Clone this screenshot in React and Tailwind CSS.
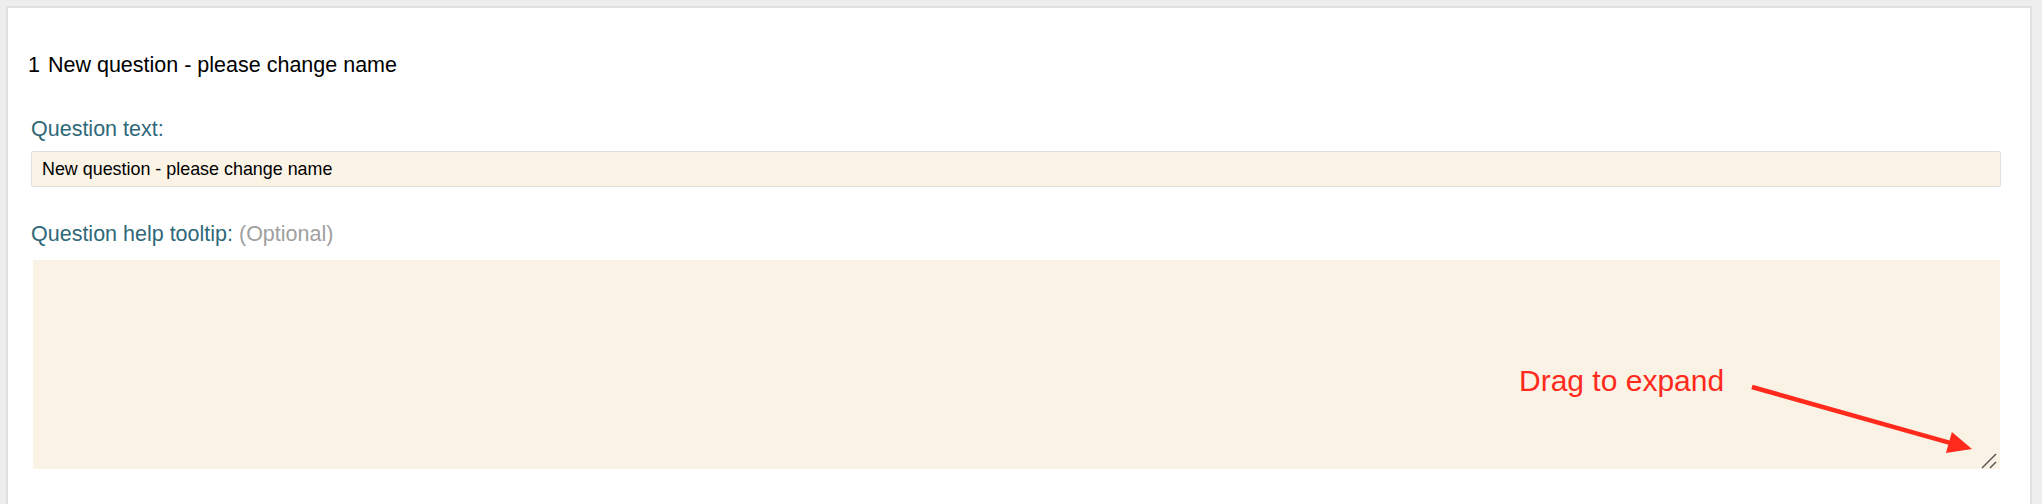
import React from "react";

export default function App() {
  const font = { fontFamily: '"Liberation Sans", Arial, Helvetica, sans-serif' };
  return (
    <div className="min-h-screen bg-[#eeeeee] pt-[6px] pl-[6px] pr-[10px]" style={font}>
      <div className="h-[498px] border-2 border-b-0 border-[#e0e0e0] bg-white">
        <div className="pl-[20px] pt-[45px] text-[21.5px] leading-[24px] text-black">
          <span>1</span>
          <span className="ml-[8px]">New question - please change name</span>
        </div>
        <div className="pl-[23px] pr-[29px]">
          <div className="mt-[40px] text-[21.5px] leading-[24px] text-[#2f6878]">Question text:</div>
          <div className="mt-[10px] h-[36px] border border-[#e2e0dc] bg-[#faf3e6] pl-[10px] rounded-[2px] flex items-center text-[17.9px] text-black">
            New question - please change name
          </div>
          <div className="mt-[35px] text-[21.5px] leading-[24px] text-[#2f6878]">
            Question help tooltip: <span className="text-[#a0a0a0]">(Optional)</span>
          </div>
          <div className="relative mt-[14px] ml-[2px] mr-[1px]">
            <textarea
              className="block h-[209px] w-full resize-none bg-[#faf2e5] outline-none border-0"
              defaultValue=""
            />
            <div className="pointer-events-none absolute left-[1486px] top-[106px] text-[30px] leading-[30px] text-[#ff2a1c] whitespace-nowrap">
              Drag to expand
            </div>
            <svg className="pointer-events-none absolute left-0 top-0 h-full w-full overflow-visible">
              <line x1="1719" y1="127" x2="1917" y2="182.8" stroke="#ff2a1c" strokeWidth="4.5" />
              <polygon points="1939,189 1918.9,171.9 1912.9,193.1" fill="#ff2a1c" />
              <line x1="1949" y1="208" x2="1963" y2="194" stroke="#555555" strokeWidth="1.5" />
              <line x1="1957" y1="208" x2="1963" y2="202" stroke="#555555" strokeWidth="1.5" />
            </svg>
          </div>
        </div>
      </div>
    </div>
  );
}
